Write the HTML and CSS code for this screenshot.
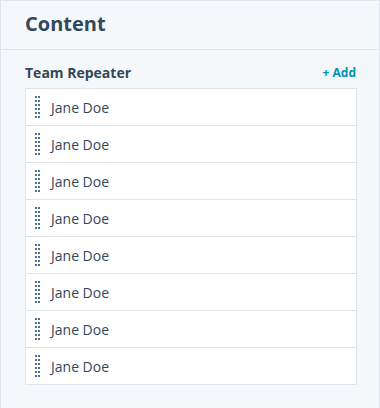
FILE: index.html
```html
<!DOCTYPE html>
<html>
<head>
    <title>Content</title>
    <link rel="stylesheet" href="styles.css">
</head>
<body>
    <div class="panel">
        <div class="panel-header">
            <h1>Content</h1>
        </div>
        <div class="panel-body">
            <div class="field-head">
                <span class="field-label">Team Repeater</span>
                <a class="add-link" href="#">+ Add</a>
            </div>
            <ul class="repeater">
                <li class="row"><span class="handle"></span><span>Jane Doe</span></li>
                <li class="row"><span class="handle"></span><span>Jane Doe</span></li>
                <li class="row"><span class="handle"></span><span>Jane Doe</span></li>
                <li class="row"><span class="handle"></span><span>Jane Doe</span></li>
                <li class="row"><span class="handle"></span><span>Jane Doe</span></li>
                <li class="row"><span class="handle"></span><span>Jane Doe</span></li>
                <li class="row"><span class="handle"></span><span>Jane Doe</span></li>
                <li class="row"><span class="handle"></span><span>Jane Doe</span></li>
            </ul>
        </div>
    </div>
</body>
</html>
```

FILE: styles.css
```css
:root {
    --bg-color: #f5f8fa;
    --border-color: #dfe3eb;
    --text-color: #33475b;
    --handle-color: #516f90;
    --link-color: #0091ae;
}

body {
    margin: 0;
    background-color: var(--bg-color);
    color: var(--text-color);
    font-family: 'Open Sans', 'Noto Sans', sans-serif;
}

.panel {
    box-sizing: border-box;
    width: 380px;
    height: 408px;
    border: 1px solid var(--border-color);
    border-bottom: none;
}

.panel-header {
    height: 48px;
    padding: 0 24px;
    display: flex;
    align-items: center;
    border-bottom: 1px solid var(--border-color);
}

h1 {
    margin: 0 0 4px 0;
    font-size: 20px;
    font-weight: 700;
}

.panel-body {
    padding: 12px 22px 0 24px;
}

.field-head {
    display: flex;
    justify-content: space-between;
    align-items: center;
    height: 20px;
    margin-bottom: 6px;
}

.field-label {
    font-size: 14px;
    font-weight: 700;
}

.add-link {
    color: var(--link-color);
    font-size: 12px;
    font-weight: 700;
    text-decoration: none;
    margin-right: 1px;
}

.repeater {
    list-style: none;
    margin: 0;
    padding: 0;
    background: #fff;
    border: 1px solid var(--border-color);
}

.row {
    display: flex;
    align-items: center;
    gap: 11px;
    height: 36px;
    padding: 0 9px;
    font-size: 14px;
    border-top: 1px solid var(--border-color);
}

.row:first-child {
    border-top: none;
}

.handle {
    width: 5px;
    height: 22px;
    background-image: linear-gradient(to bottom, var(--handle-color) 2px, transparent 2px);
    background-size: 3px 4px;
    -webkit-mask-image: linear-gradient(to right, #000 2px, transparent 2px);
    -webkit-mask-size: 3px 100%;
}
```
